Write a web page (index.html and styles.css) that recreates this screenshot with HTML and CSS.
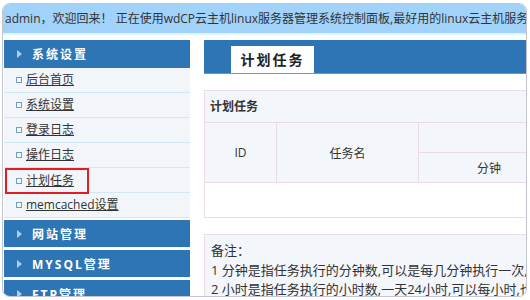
FILE: index.html
```html
<!DOCTYPE html>
<html lang="zh-CN">
<head>
  <meta charset="UTF-8">
  <title>wdCP 计划任务</title>
  <link rel="stylesheet" href="styles.css">
</head>
<body>
  <div class="frame">
    <div class="topbar">admin，欢迎回来！ 正在使用wdCP云主机linux服务器管理系统控制面板,最好用的linux云主机服务器管理面板</div>

    <div class="layout">
      <div class="sidebar">
        <div class="menu-head first"><span class="arrow"></span>系统设置</div>
        <div class="menu-item"><span class="dot"></span><a href="#">后台首页</a></div>
        <div class="menu-item"><span class="dot"></span><a href="#">系统设置</a></div>
        <div class="menu-item"><span class="dot"></span><a href="#">登录日志</a></div>
        <div class="menu-item"><span class="dot"></span><a href="#">操作日志</a></div>
        <div class="menu-item"><span class="mark"><span class="dot"></span><a href="#">计划任务</a></span></div>
        <div class="menu-item"><span class="dot"></span><a href="#">memcached设置</a></div>
        <div class="menu-head"><span class="arrow"></span>网站管理</div>
        <div class="menu-head"><span class="arrow"></span>MYSQL管理</div>
        <div class="menu-head"><span class="arrow"></span>FTP管理</div>
      </div>

      <div class="main">
        <div class="tabbar">
          <div class="tab">计划任务</div>
        </div>

        <div class="panel">
          <div class="panel-title">计划任务</div>
          <table class="grid">
            <tr class="head">
              <th rowspan="2" class="c-id">ID</th>
              <th rowspan="2" class="c-name">任务名</th>
              <th colspan="5" class="c-time">执行时间</th>
              <th rowspan="2" class="c-op">操作</th>
            </tr>
            <tr class="head">
              <th class="c-sub">分钟</th>
              <th class="c-sub">小时</th>
              <th class="c-sub">日</th>
              <th class="c-sub">月</th>
              <th class="c-sub">周</th>
            </tr>
            <tr class="empty">
              <td colspan="8"></td>
            </tr>
          </table>
        </div>

        <div class="note">
          <p>备注：</p>
          <p>1 分钟是指任务执行的分钟数,可以是每几分钟执行一次,也可以是指定的某一分钟执行</p>
          <p>2 小时是指任务执行的小时数,一天24小时,可以每小时,也可以是指定的某一小时执行</p>
          <p>3 日是指任务执行的日期,一个月中的某一天</p>
        </div>
      </div>
    </div>
  </div>
</body>
</html>
```

FILE: styles.css
```css
body { margin: 0; background: #fff; font-family: "Open Sans", "Noto Sans CJK SC", sans-serif; font-size: 12px; color: #333; }
a { color: #333; }

.frame { margin: 3px 0 0 2px; width: 523px; height: 292px; border: 1px solid #c3c6d0; border-radius: 8px; overflow: hidden; }

.topbar { height: 29px; line-height: 29px; padding-left: 2px; background: #a0d2fa; border-bottom: 2px solid #e4f2fd; white-space: nowrap; overflow: hidden; font-size: 12px; color: #333; }

.layout { display: flex; gap: 14px; padding: 5px 0 0 1px; }

.sidebar { width: 186px; flex: none; }
.menu-head { height: 27px; margin-top: 2px; display: flex; align-items: center; background: #2e75b5; color: #fff; font-weight: bold; font-size: 12px; letter-spacing: 2px; }
.menu-head + .menu-head { margin-top: 3px; }
.menu-head.first { margin-top: 0; height: 28px; }
.arrow { width: 0; height: 0; margin: 0 10px 0 13px; border-left: 5px solid #a9d0f2; border-top: 4px solid transparent; border-bottom: 4px solid transparent; }

.menu-item { height: 24px; display: flex; align-items: center; background: #f2f6fa; border-bottom: 1px solid #cfe9f3; font-size: 12px; }
.menu-item a { text-decoration: underline; line-height: 16px; }
.dot { width: 4px; height: 4px; margin: 0 4px 0 12px; border: 1px solid #6f9fc2; background: #f8fbfd; flex: none; }
.mark { display: flex; align-items: center; height: 26px; margin: 0 0 -1px 1px; padding-right: 13px; border: 2px solid #e21d24; box-sizing: border-box; }
.mark .dot { margin-left: 9px; }

.main { flex: 1; overflow: hidden; min-width: 0; }

.tabbar { height: 32px; padding-top: 1px; background: #2e75b5; border-bottom: 1px solid #5c9cd4; display: flex; align-items: flex-end; }
.tab { margin-left: 27px; width: 83px; height: 27px; line-height: 27px; text-align: center; background: #fff; font-weight: bold; font-size: 14px; letter-spacing: 2px; color: #222; }

.panel { margin-top: 16px; width: 1020px; border: 1px solid #ecdbe7; }
.panel-title { height: 31px; line-height: 31px; padding-left: 5px; background: #f3f6fa; border-bottom: 1px solid #ecdbe7; font-weight: bold; font-size: 12px; }

.grid { border-collapse: collapse; width: 100%; table-layout: fixed; }
.grid th { background: #f3f6fa; border: 1px solid #ecdbe7; font-weight: normal; font-size: 12px; height: 29px; padding: 0; color: #333; }
.grid tr:first-child th { border-top: none; }
.grid th:first-child { border-left: none; }
.grid .c-id { width: 71px; }
.grid .c-name { width: 141px; }
.grid .c-sub { width: 141px; }
.grid .c-op { width: 100px; }
.grid td { height: 32px; border: none; }

.note { margin-top: 16px; width: 1000px; padding: 6px; background: #f3f6fa; border: 1px solid #ecdbe7; white-space: nowrap; }
.note p { margin: 0; line-height: 19.5px; font-size: 13px; }
```
